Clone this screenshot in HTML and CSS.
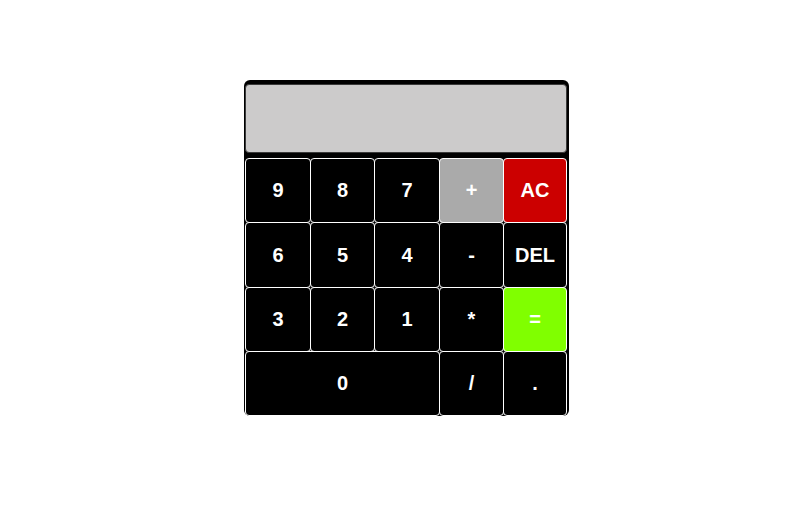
FILE: index.html
```html
<!DOCTYPE html>
<html>
<head>
<meta charset="utf-8">
<link rel="stylesheet" href="styles.css">
</head>
<body>
<div class="calc">
  <div class="display"></div>
  <div class="keys">
    <button class="key">9</button>
    <button class="key">8</button>
    <button class="key">7</button>
    <button class="key op-plus">+</button>
    <button class="key clear">AC</button>
    <button class="key">6</button>
    <button class="key">5</button>
    <button class="key">4</button>
    <button class="key">-</button>
    <button class="key">DEL</button>
    <button class="key">3</button>
    <button class="key">2</button>
    <button class="key">1</button>
    <button class="key">*</button>
    <button class="key equals">=</button>
    <button class="key zero">0</button>
    <button class="key">/</button>
    <button class="key">.</button>
  </div>
</div>
</body>
</html>
```
FILE: styles.css
```css
html, body {
  margin: 0;
  padding: 0;
  background: #fff;
}
body {
  padding-top: 80px;
  font-family: "Liberation Sans", Arial, sans-serif;
}
.calc {
  width: 325px;
  margin-left: 244px;
  box-sizing: border-box;
  background: #000;
  border-radius: 6px;
  padding: 4px 2px 1px 1px;
}
.display {
  height: 69px;
  box-sizing: border-box;
  background: #cccbcb;
  border: 1px solid #3a3a3a;
  border-radius: 4px;
}
.keys {
  margin-top: 5px;
  display: grid;
  grid-template-columns: 65px 64px 65px 64px 63px;
  grid-template-rows: 64px 65px 64px 64px;
  padding-right: 1px;
}
.key {
  margin: 0 -1px -1px 0;
  background: #000;
  color: #fff;
  border: 1px solid #fff;
  border-radius: 4px;
  font-family: "Liberation Sans", Arial, sans-serif;
  font-weight: bold;
  font-size: 20px;
  padding: 0;
  display: flex;
  align-items: center;
  justify-content: center;
}
.op-plus {
  background: #aaaaaa;
}
.clear {
  background: #cc0000;
}
.equals {
  background: #80ff00;
}
.zero {
  grid-column: span 3;
}
```
